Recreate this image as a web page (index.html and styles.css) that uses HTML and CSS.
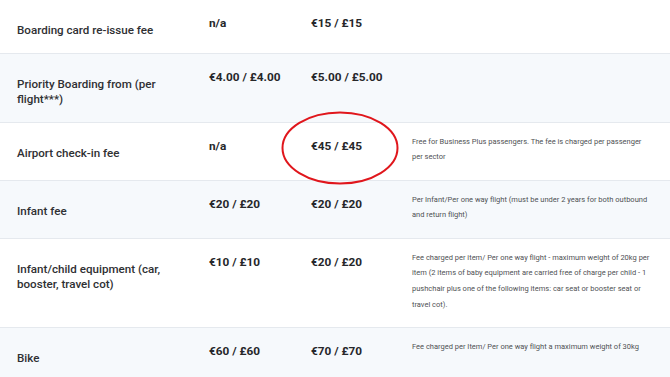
FILE: index.html
```html
<!DOCTYPE html>
<html lang="en">
<head>
<meta charset="utf-8">
<title>Fees</title>
<link rel="stylesheet" href="styles.css">
</head>
<body>
<div class="table">
  <div class="row">
    <div class="label">Boarding card re-issue fee</div>
    <div class="val">n/a</div>
    <div class="val">€15 / £15</div>
    <div class="note"></div>
  </div>
  <div class="row alt">
    <div class="label">Priority Boarding from (per flight***)</div>
    <div class="val">€4.00 / £4.00</div>
    <div class="val">€5.00 / £5.00</div>
    <div class="note"></div>
  </div>
  <div class="row">
    <div class="label">Airport check-in fee</div>
    <div class="val">n/a</div>
    <div class="val">€45 / £45</div>
    <div class="note">Free for Business Plus passengers. The fee is charged per passenger per sector</div>
  </div>
  <div class="row alt">
    <div class="label">Infant fee</div>
    <div class="val">€20 / £20</div>
    <div class="val">€20 / £20</div>
    <div class="note">Per Infant/Per one way flight (must be under 2 years for both outbound and return flight)</div>
  </div>
  <div class="row">
    <div class="label">Infant/child equipment (car, booster, travel cot)</div>
    <div class="val">€10 / £10</div>
    <div class="val">€20 / £20</div>
    <div class="note">Fee charged per item/ Per one way flight - maximum weight of 20kg per item (2 items of baby equipment are carried free of charge per child - 1 pushchair plus one of the following items: car seat or booster seat or travel cot).</div>
  </div>
  <div class="row alt">
    <div class="label">Bike</div>
    <div class="val">€60 / £60</div>
    <div class="val">€70 / £70</div>
    <div class="note">Fee charged per Item/ Per one way flight a maximum weight of 30kg</div>
  </div>
  <svg class="circle" width="120" height="76" viewBox="0 0 120 76" aria-hidden="true">
    <ellipse cx="60" cy="38" rx="57.5" ry="35.5" fill="none" stroke="#e0161c" stroke-width="2"/>
  </svg>
</div>
</body>
</html>
```

FILE: styles.css
```css
html, body {
  margin: 0;
  padding: 0;
  background: #ffffff;
}
body {
  font-family: Roboto, "Liberation Sans", Arial, sans-serif;
  width: 670px;
  height: 377px;
  overflow: hidden;
}
.table {
  position: relative;
  width: 670px;
}
.row {
  display: grid;
  grid-template-columns: 209px 102px 101px 240px 18px;
  border-bottom: 1px solid #e5e9ee;
  background: #ffffff;
}
.row.alt {
  background: #f6f9fc;
}
.label {
  padding: 23px 14px 14px 17px;
  font-size: 11.6px;
  line-height: 15.5px;
  font-weight: 500;
  color: #2f3033;
}
.val {
  padding-top: 15px;
  font-size: 11.8px;
  line-height: 16px;
  font-weight: 700;
  color: #26272a;
}
.note {
  padding: 11px 0 15px 0;
  font-size: 7.5px;
  line-height: 15.6px;
  color: #4f5154;
}
.circle {
  position: absolute;
  left: 280px;
  top: 110px;
}
```
